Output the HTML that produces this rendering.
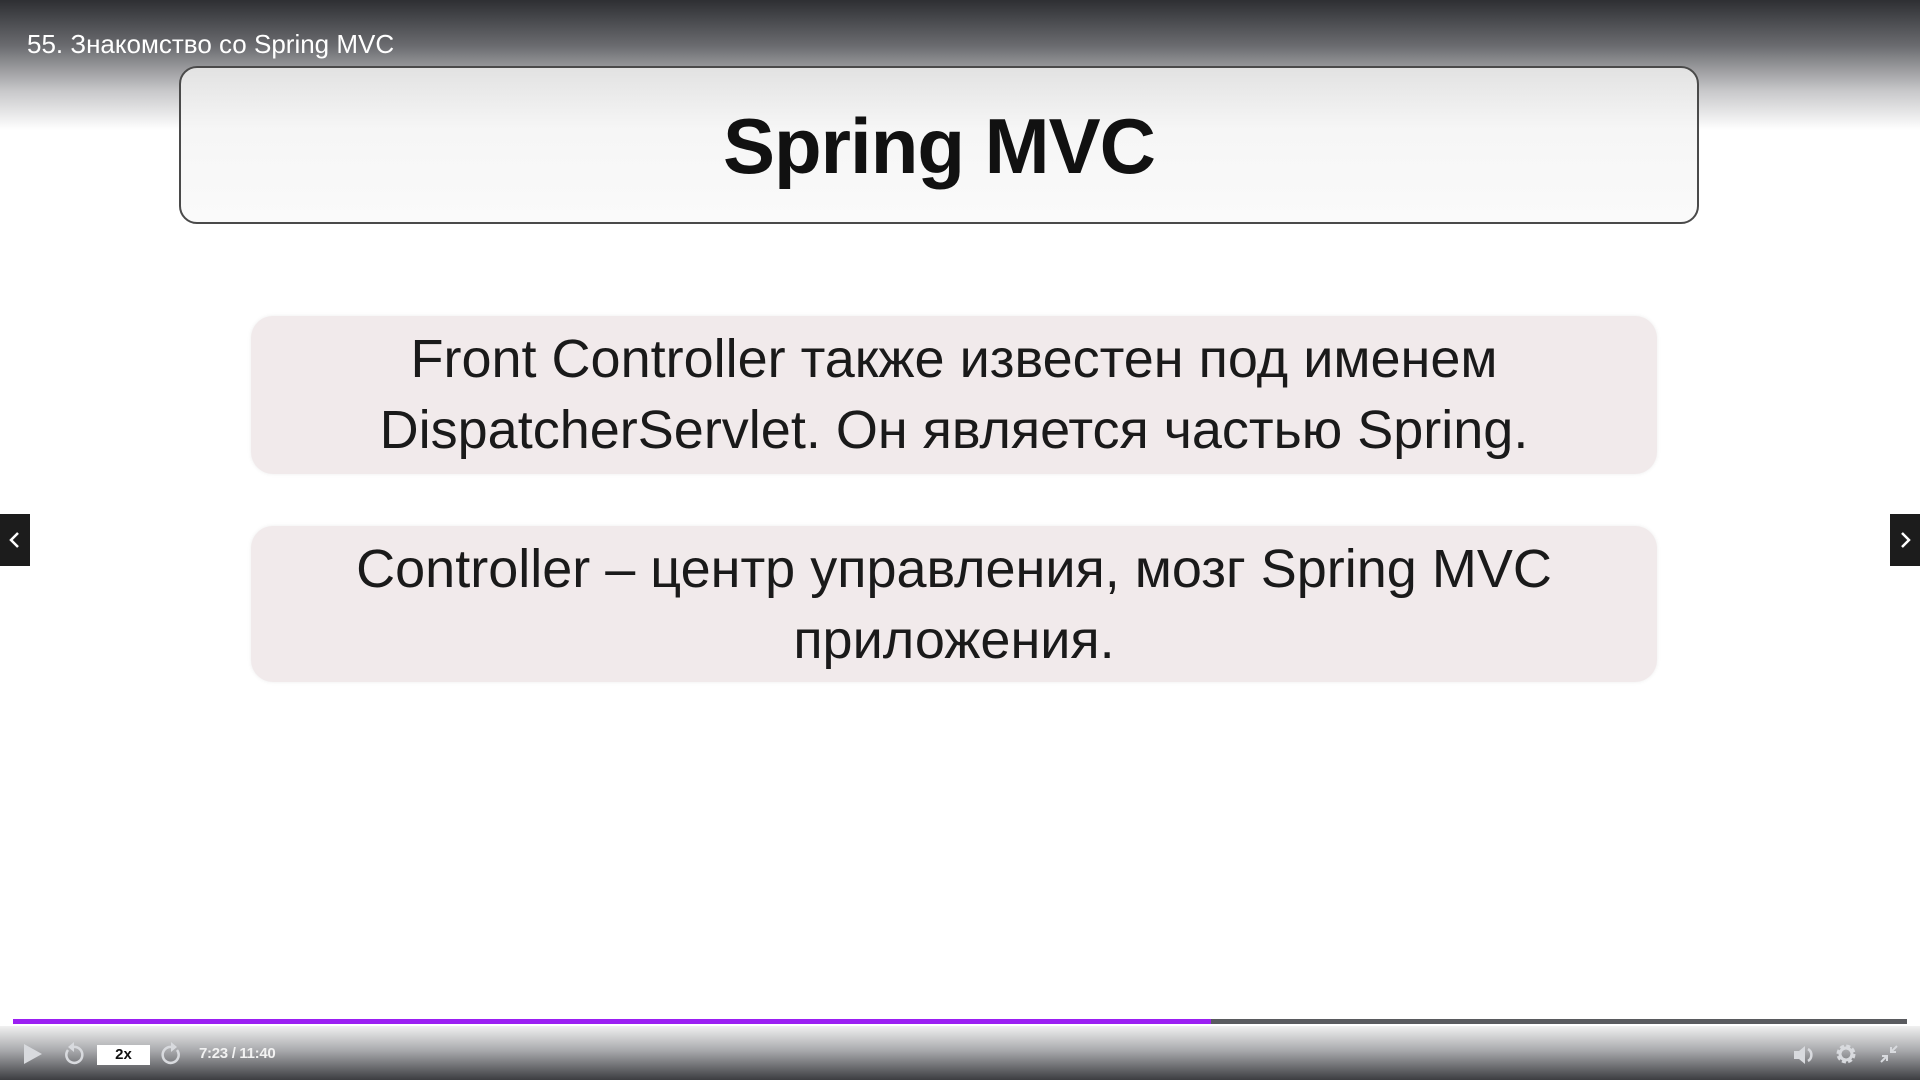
<!DOCTYPE html>
<html><head><meta charset="utf-8"><style>
html,body{margin:0;padding:0;width:1920px;height:1080px;overflow:hidden;background:#fff;font-family:"Liberation Sans",sans-serif;}
.topg{position:absolute;left:0;top:0;width:1920px;height:130px;background:linear-gradient(#2e2f33 0%,#6a6b6f 35%,#c8c8ca 70%,rgba(255,255,255,0) 100%);}
.title{position:absolute;left:27px;top:29px;color:#fff;font-size:26px;}
.hdr{position:absolute;left:179px;top:66px;width:1520px;height:158px;border:2px solid #4a4a4a;border-radius:18px;background:linear-gradient(#e2e2e2,#f6f6f6 40%,#fafafa);box-sizing:border-box;text-align:center;}
.hdr span{display:block;font-weight:bold;font-size:78px;line-height:156px;color:#111;letter-spacing:-1px;}
.box{position:absolute;left:251px;width:1406px;background:#f1eaeb;border-radius:22px;text-align:center;color:#1a1a1a;font-size:54px;line-height:71px;box-shadow:0 0 4px #eee;}
.nav{position:absolute;top:514px;width:30px;height:52px;background:#1c1c1c;color:#fff;}
.pb{position:absolute;left:13px;top:1019px;width:1894px;height:5px;background:#5a5b5f;}
.pb i{display:block;width:1198px;height:5px;background:#9b1ff2;}
.botg{position:absolute;left:0;top:1026px;width:1920px;height:54px;background:linear-gradient(#f0f0f0,#a9aaad 45%,#3c3d41);}
.ctl{position:absolute;color:#eee;}
</style></head><body>
<div class="topg"></div>
<div class="title">55. Знакомство со Spring MVC</div>
<div class="hdr"><span>Spring MVC</span></div>
<div class="box" style="top:316px;height:158px;padding-top:8px;box-sizing:border-box">Front Controller также известен под именем<br>DispatcherServlet. Он является частью Spring.</div>
<div class="box" style="top:526px;height:156px;padding-top:8px;box-sizing:border-box">Controller – центр управления, мозг Spring MVC<br>приложения.</div>
<div class="nav" style="left:0"><svg width="30" height="52"><path d="M18 19 L11 26 L18 33" stroke="#fff" stroke-width="2.5" fill="none"/></svg></div>
<div class="nav" style="left:1890px"><svg width="30" height="52"><path d="M12 19 L19 26 L12 33" stroke="#fff" stroke-width="2.5" fill="none"/></svg></div>
<div class="pb"><i></i></div>
<div class="botg"></div>
<svg class="ctl" style="left:22px;top:1042px" width="22" height="24"><path d="M2 2 L20 12 L2 22Z" fill="#d8dade"/></svg>
<svg class="ctl" style="left:62px;top:1042px" width="22" height="24"><path d="M6 8 A8 8 0 1 0 11 5" stroke="#d8dade" stroke-width="2.5" fill="none"/><path d="M12 0 L12 10 L6 5Z" fill="#d8dade"/></svg>
<div style="position:absolute;left:97px;top:1045px;width:53px;height:20px;background:#fff;font-weight:bold;font-size:15px;text-align:center;line-height:20px;color:#111">2x</div>
<svg class="ctl" style="left:161px;top:1042px" width="22" height="24"><path d="M16 8 A8 8 0 1 1 11 5" stroke="#d8dade" stroke-width="2.5" fill="none"/><path d="M10 0 L10 10 L16 5Z" fill="#d8dade"/></svg>
<div style="position:absolute;left:199px;top:1045px;color:#f2f2f2;font-weight:bold;font-size:15px;letter-spacing:-0.3px">7:23 / 11:40</div>
<svg class="ctl" style="left:1793px;top:1044px" width="24" height="22"><path d="M1 7 H6 L12 2 V20 L6 15 H1Z" fill="#d8dade"/><path d="M15 5 A7 7 0 0 1 15 17" stroke="#d8dade" stroke-width="2.5" fill="none"/></svg>
<svg class="ctl" style="left:1834px;top:1042px" width="24" height="24"><circle cx="12" cy="12" r="7" fill="none" stroke="#d8dade" stroke-width="5" stroke-dasharray="3.5 2"/><circle cx="12" cy="12" r="6" fill="none" stroke="#d8dade" stroke-width="3"/></svg>
<svg class="ctl" style="left:1878px;top:1043px" width="22" height="22"><path d="M3 19 L9 13 M4 13 H9 V18 M19 3 L13 9 M13 4 V9 H18" stroke="#d8dade" stroke-width="2" fill="none"/></svg>
</body></html>
